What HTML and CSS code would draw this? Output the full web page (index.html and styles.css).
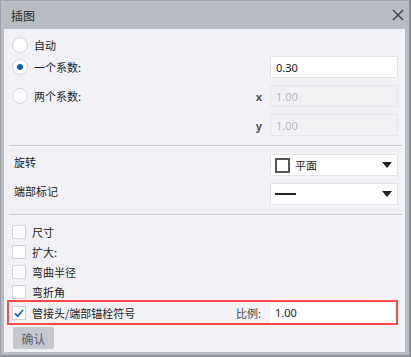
FILE: index.html
```html
<!DOCTYPE html>
<html>
<head>
<meta charset="utf-8">
<link rel="stylesheet" href="styles.css">
</head>
<body>
<div class="window">
  <div class="titlebar">
    <span class="title">插图</span>
    <svg class="close" width="12" height="12" viewBox="0 0 12 12"><path d="M1 1L11 11M11 1L1 11" stroke="#3a3a3a" stroke-width="1.3" fill="none"/></svg>
  </div>
  <div class="content">
    <div class="sec1">
      <div class="row first">
        <span class="radio"></span><span class="lbl">自动</span>
      </div>
      <div class="row">
        <span class="radio on"></span><span class="lbl">一个系数:</span>
        <span class="spacer"></span>
        <div class="input">0.30</div>
      </div>
      <div class="row gap">
        <span class="radio"></span><span class="lbl">两个系数:</span>
        <span class="spacer"></span>
        <span class="axis">x</span>
        <div class="input disabled">1.00</div>
      </div>
      <div class="row gap">
        <span class="spacer"></span>
        <span class="axis">y</span>
        <div class="input disabled">1.00</div>
      </div>
    </div>
    <div class="sep"></div>
    <div class="sec2">
      <div class="drow">
        <span class="dlbl">旋转</span>
        <span class="spacer"></span>
        <div class="dropdown">
          <span class="sq"></span><span class="dtext">平面</span>
          <span class="spacer"></span>
          <svg class="arrow" width="10" height="6" viewBox="0 0 10 6"><path d="M0 0H10L5 6Z" fill="#222"/></svg>
        </div>
      </div>
      <div class="drow gap">
        <span class="dlbl">端部标记</span>
        <span class="spacer"></span>
        <div class="dropdown">
          <span class="dash"></span>
          <span class="spacer"></span>
          <svg class="arrow" width="10" height="6" viewBox="0 0 10 6"><path d="M0 0H10L5 6Z" fill="#222"/></svg>
        </div>
      </div>
    </div>
    <div class="sep"></div>
    <div class="sec3">
      <div class="crow"><span class="cb"></span><span class="lbl">尺寸</span></div>
      <div class="crow"><span class="cb"></span><span class="lbl">扩大:</span></div>
      <div class="crow"><span class="cb"></span><span class="lbl">弯曲半径</span></div>
      <div class="crow"><span class="cb"></span><span class="lbl">弯折角</span></div>
      <div class="hl">
        <span class="cb"><svg width="12" height="12" viewBox="0 0 12 12"><path d="M2 6.5L4.8 9.2L10 3" stroke="#1565b8" stroke-width="1.8" fill="none"/></svg></span>
        <span class="lbl">管接头/端部锚栓符号</span>
        <span class="spacer"></span>
        <span class="ratio">比例:</span>
        <div class="input hlin">1.00</div>
      </div>
    </div>
    <div class="btnrow"><button class="btn">确认</button></div>
  </div>
</div>
</body>
</html>
```
FILE: styles.css
```css
* { box-sizing: border-box; }
html, body { margin: 0; padding: 0; }
body {
  width: 411px; height: 357px; overflow: hidden;
  background: #b9bcc3;
  font-family: "Noto Sans CJK SC", "Noto Sans", sans-serif;
  font-size: 11px; color: #1c1c1c;
}
.window {
  width: 411px; height: 357px;
  display: flex; flex-direction: column;
  background: #b9bcc3;
  border-left: 1px solid #9c9fa6;
  border-top: 1px solid #9c9fa6;
  border-right: 2px solid #8e9198;
  border-bottom: 2px solid #8e9198;
}
.titlebar {
  height: 28px; flex: none;
  display: flex; align-items: center;
  padding: 0 5px 0 10px;
}
.title { font-size: 12px; color: #2a2a2a; flex: 1; }
.close { margin-right: 0px; }
.content {
  margin: 0 4px 0 3px;
  height: 323px;
  background: #f1f1f6;
  padding: 5px 7px 0 8px;
  display: flex; flex-direction: column;
}
.row { display: flex; align-items: center; height: 22px; }
.row.gap { margin-top: 7px; }
.spacer { flex: 1; }
.radio {
  width: 16px; height: 16px; border-radius: 50%;
  background: #fff; border: 1px solid #d4d4dc;
  margin-right: 6px; position: relative; flex: none;
}
.radio.on::after {
  content: ""; position: absolute; left: 4px; top: 4px;
  width: 6px; height: 6px; border-radius: 50%; background: #0b62b0;
}
.lbl { white-space: nowrap; }
.axis { font-family: "Noto Sans", sans-serif; font-weight: bold; color: #555; margin-right: 8px; font-size: 11px; }
.input {
  width: 128px; height: 22px; background: #fff;
  border: 1px solid #e2e2e8;
  font-family: "Noto Sans", sans-serif; font-size: 11px;
  display: flex; align-items: center; padding-left: 5px; color: #1c1c1c;
}
.input.disabled { background: #f2f2f5; color: #b9b9c2; border-color: #e6e6eb; }
.sep { height: 2px; background: #c9c9d1; border-bottom: 1px solid #fafafc; margin: 9px -4px 0 -3px; }
.sec2 { padding-top: 7px; }
.drow { display: flex; align-items: flex-start; height: 22px; }
.drow.gap { margin-top: 7px; }
.dlbl { line-height: 16px; padding-left: 2px; }
.dropdown {
  width: 128px; height: 22px; background: #fff;
  border: 1px solid #e2e2e8;
  display: flex; align-items: center; padding: 0 5px 0 4px;
}
.sq { width: 15px; height: 15px; border: 2px solid #555; margin-right: 5px; flex: none; }
.dtext { color: #222; }
.dash { width: 21px; height: 2px; background: #222; }
.arrow { flex: none; }
.sec3 { padding-top: 6px; display: flex; flex-direction: column; }
.crow { display: flex; align-items: center; height: 20px; }
.cb {
  width: 14px; height: 14px; background: #fff; border: 1px solid #d4d4dc;
  margin-right: 6px; flex: none; display: flex; align-items: center; justify-content: center;
}
.hl {
  display: flex; align-items: center;
  height: 25px; margin: -2px 0 0 -5px;
  border: 2px solid #ff4a4a; padding-left: 3px;
}
.ratio { color: #444; margin-right: 9px; }
.input.hlin { height: 20px; width: 126px; border: none; }
.btnrow { padding-top: 2px; padding-left: 1px; }
.btn {
  width: 41px; height: 22px; border: none; border-radius: 2px;
  background: #c5c8ce; color: #5e5e62;
  font-family: "Noto Sans CJK SC", sans-serif; font-size: 12px; padding: 0;
}
```
